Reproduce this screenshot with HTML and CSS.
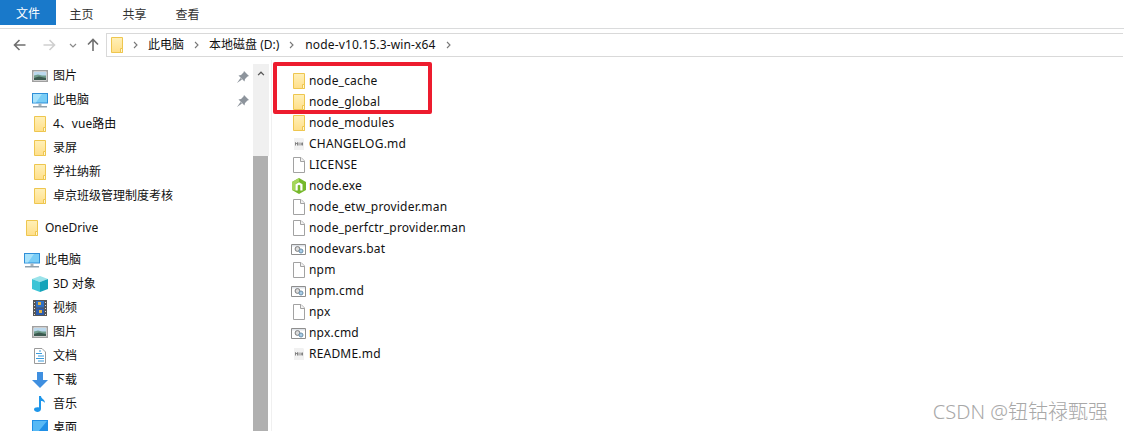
FILE: index.html
```html
<!DOCTYPE html>
<html lang="zh">
<head>
<meta charset="utf-8">
<title>node-v10.15.3-win-x64</title>
<link rel="stylesheet" href="styles.css">
</head>
<body>
<svg class="defs" width="0" height="0" aria-hidden="true">
  <linearGradient id="fg" x1="0" y1="0" x2="0" y2="1">
    <stop offset="0" stop-color="#fff0b8"/>
    <stop offset="1" stop-color="#ffdf8a"/>
  </linearGradient>
  <symbol id="folder" viewBox="0 0 16 16">
    <path d="M2.500.500h11v15h-11z" fill="url(#fg)" stroke="#eec64f"/>
    <path d="M11.500 11.500h2v4h-2z" fill="#fff6d5" stroke="#eec64f"/>
  </symbol>
  <symbol id="doc" viewBox="0 0 16 16">
    <path d="M2.500.500h7.500l3.500 3.500v11.500h-11z" fill="#fff" stroke="#a2a2a2"/>
    <path d="M9.500.500v4h4" fill="#f2f2f2" stroke="#a2a2a2"/>
  </symbol>
  <symbol id="md" viewBox="0 0 16 16">
    <path d="M3 2h9l1 1v11H3z" fill="#f1f1f1"/>
    <path d="M4.500 9.500v-3l1 1.500 1-1.500v3M8 6.500v3M10 6.500v3M11.500 6.500v3M10 8h1.500" fill="none" stroke="#777" stroke-width=".9"/>
  </symbol>
  <symbol id="bat" viewBox="0 0 16 16">
    <path d="M.5 3.500h14v10H.5z" fill="#fff" stroke="#8e8e8e"/>
    <path d="M1 4h13v1.500H1z" fill="#dfe3e8"/>
    <circle cx="6.500" cy="8" r="2.400" fill="#dcdcdc" stroke="#7d7d7d"/>
    <circle cx="10" cy="10" r="2" fill="#a9cde8" stroke="#6a8ea8"/>
  </symbol>
  <symbol id="node" viewBox="0 0 16 16">
    <path d="M8 0l7 4v8l-7 4-7-4V4z" fill="#76b82a"/>
    <path d="M1 4l7-4v3.500L4.500 6v6.500L1 12z" fill="#a5d65a"/>
    <path d="M4.500 12.500V6.300L8 4.300l3.500 2v6.200H9.300V7.500L8 6.700l-1.300.8v5z" fill="#fff"/>
  </symbol>
  <symbol id="pic" viewBox="0 0 16 16">
    <path d="M.75 2.750h14.500v10.500H.75z" fill="#fff" stroke="#a0a0a0" stroke-width="1.500"/>
    <path d="M2 4h12v4H2z" fill="#bcd9ee"/>
    <path d="M2 7.500l4-1 4 1h4V12H2z" fill="#6f9c8c"/>
    <path d="M2 10l5-1.500L14 10v2H2z" fill="#3c5a50"/>
  </symbol>
  <symbol id="pc" viewBox="0 0 16 16">
    <path d="M0 1h16v10.500H0z" fill="#2f8fd8"/>
    <path d="M1 2h14v8.500H1z" fill="#79cdf6"/>
    <path d="M1 2h9L4 10.500H1z" fill="#a8e2fb"/>
    <path d="M6.500 11.500h3V14h-3z" fill="#a8b4bc"/>
    <path d="M1 14h14v1.500H1z" fill="#8fa0ac"/>
  </symbol>
  <symbol id="cube" viewBox="0 0 16 16">
    <path d="M8 0l8 3-8 3-8-3z" fill="#9ae3ea"/>
    <path d="M0 3l8 3v10l-8-3z" fill="#3cc4d6"/>
    <path d="M16 3L8 6v10l8-3z" fill="#15a4ba"/>
  </symbol>
  <symbol id="film" viewBox="0 0 16 16">
    <path d="M1 0h14v16H1z" fill="#555"/>
    <path d="M4 1h8v6.500H4z" fill="#2f6fc4"/>
    <path d="M4 8.500h8V15H4z" fill="#2b5db0"/>
    <path d="M6 2h3v3H6zm1 8h3v3H7z" fill="#e3b341"/>
    <path d="M2 2h1v1H2zm0 3h1v1H2zm0 3h1v1H2zm0 3h1v1H2zm0 3h1v1H2zm11-12h1v1h-1zm0 3h1v1h-1zm0 3h1v1h-1zm0 3h1v1h-1zm0 3h1v1h-1z" fill="#ddd"/>
  </symbol>
  <symbol id="docs" viewBox="0 0 16 16">
    <path d="M2.500.500h7.500l3.500 3.500v11.500h-11z" fill="#fff" stroke="#9a9a9a"/>
    <path d="M7 3h2M4 5.500h6M6 8h6M4 10.500h8M6 13h6" stroke="#3a9bdc" fill="none"/>
  </symbol>
  <symbol id="down" viewBox="0 0 16 16">
    <path d="M5 0h6v8h5l-8 8-8-8h5z" fill="#3f8fe0"/>
  </symbol>
  <symbol id="music" viewBox="0 0 16 16">
    <path d="M7 0h2c0 3 4 3 4 7-1-1.500-2.500-2-4-2v8c0 2-2 3-3.500 3S2 15 2 13.500 4 11 7 11.500z" fill="#1e96ea"/>
  </symbol>
  <symbol id="desk" viewBox="0 0 16 16">
    <path d="M0 0h16v14H0z" fill="#1f8fe6"/>
    <path d="M1 1h14L6 12H1z" fill="#57b9f5"/>
  </symbol>
  <symbol id="pin" viewBox="0 0 12 12">
    <path d="M7 0l5 5-1.500.5L8 8l-.5 2.500-6-6L4 4l2.500-2.500zM3.500 7L0 12l5-3.500z" fill="#8d949c"/>
  </symbol>
</svg>

<header class="tabs">
  <div class="tab tab-file">文件</div>
  <div class="tab">主页</div>
  <div class="tab">共享</div>
  <div class="tab">查看</div>
</header>

<div class="addressrow">
  <div class="navbtns">
    <svg class="nb nb-back" viewBox="0 0 13 12"><path d="M12.500 6H2M6.500 1L1.500 6l5 5" fill="none" stroke="#6f6f6f" stroke-width="1.600"/></svg>
    <svg class="nb nb-fwd" viewBox="0 0 13 12"><path d="M.5 6H11M6.500 1l5 5-5 5" fill="none" stroke="#cfcfcf" stroke-width="1.600"/></svg>
    <svg class="nb nb-drop" viewBox="0 0 8 5"><path d="M1 1l3 3 3-3" fill="none" stroke="#8a8a8a" stroke-width="1.200"/></svg>
    <svg class="nb nb-up" viewBox="0 0 12 14"><path d="M6 13V2M1 6.500l5-5 5 5" fill="none" stroke="#6f6f6f" stroke-width="1.600"/></svg>
  </div>
  <div class="address">
    <svg class="ic-addr"><use href="#folder"/></svg>
    <svg class="chev" viewBox="0 0 5 8"><path d="M1 1l3 3-3 3" fill="none" stroke="#777" stroke-width="1.100"/></svg>
    <span class="crumb">此电脑</span>
    <svg class="chev" viewBox="0 0 5 8"><path d="M1 1l3 3-3 3" fill="none" stroke="#777" stroke-width="1.100"/></svg>
    <span class="crumb">本地磁盘 (D:)</span>
    <svg class="chev" viewBox="0 0 5 8"><path d="M1 1l3 3-3 3" fill="none" stroke="#777" stroke-width="1.100"/></svg>
    <span class="crumb crumb-wide">node-v10.15.3-win-x64</span>
    <svg class="chev" viewBox="0 0 5 8"><path d="M1 1l3 3-3 3" fill="none" stroke="#777" stroke-width="1.100"/></svg>
  </div>
</div>

<main class="main">
  <nav class="nav">
    <ul class="navlist">
      <li class="row lvl2"><svg class="ni"><use href="#pic"/></svg><span class="lbl">图片</span><svg class="pin"><use href="#pin"/></svg></li>
      <li class="row lvl2"><svg class="ni"><use href="#pc"/></svg><span class="lbl">此电脑</span><svg class="pin"><use href="#pin"/></svg></li>
      <li class="row lvl2"><svg class="ni"><use href="#folder"/></svg><span class="lbl">4、vue路由</span></li>
      <li class="row lvl2"><svg class="ni"><use href="#folder"/></svg><span class="lbl">录屏</span></li>
      <li class="row lvl2"><svg class="ni"><use href="#folder"/></svg><span class="lbl">学社纳新</span></li>
      <li class="row lvl2"><svg class="ni"><use href="#folder"/></svg><span class="lbl">卓京班级管理制度考核</span></li>
      <li class="row lvl1 gap"><svg class="ni"><use href="#folder"/></svg><span class="lbl">OneDrive</span></li>
      <li class="row lvl1 gap"><svg class="ni"><use href="#pc"/></svg><span class="lbl">此电脑</span></li>
      <li class="row lvl2"><svg class="ni"><use href="#cube"/></svg><span class="lbl">3D 对象</span></li>
      <li class="row lvl2"><svg class="ni"><use href="#film"/></svg><span class="lbl">视频</span></li>
      <li class="row lvl2"><svg class="ni"><use href="#pic"/></svg><span class="lbl">图片</span></li>
      <li class="row lvl2"><svg class="ni"><use href="#docs"/></svg><span class="lbl">文档</span></li>
      <li class="row lvl2"><svg class="ni"><use href="#down"/></svg><span class="lbl">下载</span></li>
      <li class="row lvl2"><svg class="ni"><use href="#music"/></svg><span class="lbl">音乐</span></li>
      <li class="row lvl2"><svg class="ni"><use href="#desk"/></svg><span class="lbl">桌面</span></li>
    </ul>
  </nav>
  <div class="scrollbar">
    <div class="sb-track"><svg class="sb-up" viewBox="0 0 9 6"><path d="M1 5l3.500-3.500L8 5" fill="none" stroke="#555" stroke-width="1.500"/></svg></div>
    <div class="sb-thumb"></div>
  </div>
  <section class="files">
    <div class="file"><svg class="fi"><use href="#folder"/></svg><span>node_cache</span></div>
    <div class="file"><svg class="fi"><use href="#folder"/></svg><span>node_global</span></div>
    <div class="file"><svg class="fi"><use href="#folder"/></svg><span>node_modules</span></div>
    <div class="file"><svg class="fi"><use href="#md"/></svg><span>CHANGELOG.md</span></div>
    <div class="file"><svg class="fi"><use href="#doc"/></svg><span>LICENSE</span></div>
    <div class="file"><svg class="fi"><use href="#node"/></svg><span>node.exe</span></div>
    <div class="file"><svg class="fi"><use href="#doc"/></svg><span>node_etw_provider.man</span></div>
    <div class="file"><svg class="fi"><use href="#doc"/></svg><span>node_perfctr_provider.man</span></div>
    <div class="file"><svg class="fi"><use href="#bat"/></svg><span>nodevars.bat</span></div>
    <div class="file"><svg class="fi"><use href="#doc"/></svg><span>npm</span></div>
    <div class="file"><svg class="fi"><use href="#bat"/></svg><span>npm.cmd</span></div>
    <div class="file"><svg class="fi"><use href="#doc"/></svg><span>npx</span></div>
    <div class="file"><svg class="fi"><use href="#bat"/></svg><span>npx.cmd</span></div>
    <div class="file"><svg class="fi"><use href="#md"/></svg><span>README.md</span></div>
  </section>
</main>
<div class="highlight"></div>
<div class="watermark">CSDN @钮钴禄甄强</div>
</body>
</html>
```
FILE: styles.css
```css
* { box-sizing: border-box; }
html, body { margin: 0; padding: 0; }
body {
  width: 1124px;
  height: 431px;
  overflow: hidden;
  background: #fff;
  color: #111;
  font: 12px/16px "Noto Sans", "Noto Sans CJK SC", sans-serif;
  position: relative;
}
.defs { position: absolute; }
.tabs { display: flex; height: 25px; }
.tab { width: 53px; line-height: 29px; text-align: center; color: #333; }
.tab-file { width: 56px; height: 25px; line-height: 27px; margin-right: -1px; background: #1979ca; color: #fff; }

.addressrow {
  display: flex;
  height: 32px;
  margin-top: 3px;
  border-top: 1px solid #dadbdc;
  padding-top: 4px;
}
.navbtns { width: 106px; height: 24px; display: flex; align-items: center; padding-left: 13px; }
.nb { flex: none; }
.nb-back { width: 13px; height: 12px; }
.nb-fwd { width: 13px; height: 12px; margin-left: 17px; }
.nb-drop { width: 8px; height: 5px; margin-left: 13px; }
.nb-up { width: 12px; height: 14px; margin-left: 10px; }
.address {
  width: 1017px;
  height: 24px;
  border: 1px solid #d9d9d9;
  border-right: 0;
  display: flex;
  align-items: center;
  padding-left: 2px;
}
.ic-addr { width: 16px; height: 16px; flex: none; }
.chev { width: 5px; height: 8px; flex: none; margin: 0 10px 0 10px; }
.ic-addr + .chev { margin-left: 8px; }
.crumb { white-space: nowrap; }
.crumb-wide { letter-spacing: .14px; margin-left: 1px; }

.main { display: flex; height: 371px; }
.nav { width: 253px; flex: none; overflow: hidden; padding-top: 4px; }
.navlist { list-style: none; margin: 0; padding: 0; }
.row { display: flex; align-items: center; height: 24px; position: relative; }
.row.gap { margin-top: 8px; }
.lvl2 { padding-left: 32px; }
.lvl1 { padding-left: 24px; }
.ni { width: 16px; height: 16px; flex: none; margin-right: 5px; }
.lbl { white-space: nowrap; }
.pin { width: 12px; height: 12px; position: absolute; left: 237px; top: 7px; }

.scrollbar { width: 16px; flex: none; display: flex; flex-direction: column; margin-top: 4px; }
.sb-track { height: 92px; background: #f0f0f0; padding: 7px 3px 0 4px; }
.sb-up { display: block; width: 8px; height: 5px; }
.sb-thumb { flex: 1; background: #b0b0b0; margin-right: 1px; }

.files { margin-left: 2px; border-left: 1px solid #f0f0f0; padding: 10px 0 0 19px; flex: 1; }
.file { display: flex; align-items: center; height: 21px; white-space: nowrap; letter-spacing: .2px; }
.fi { width: 16px; height: 16px; flex: none; margin-right: 2px; }

.highlight {
  position: absolute;
  left: 273px;
  top: 62px;
  width: 159px;
  height: 52px;
  border: 4px solid #ed1c2e;
  border-radius: 2px;
}
.watermark {
  position: absolute;
  right: 16px;
  top: 399px;
  font-size: 20px;
  font-weight: 300;
  line-height: 26px;
  color: #a8a8a8;
  white-space: nowrap;
}
```
